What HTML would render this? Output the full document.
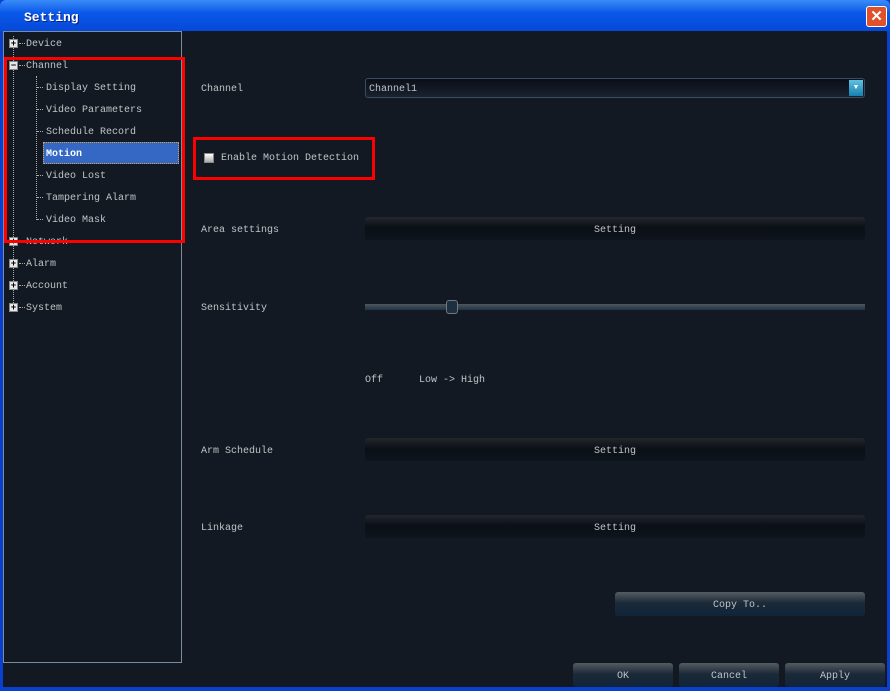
<!DOCTYPE html><html><head><style>
*{margin:0;padding:0;box-sizing:border-box}
body{width:890px;height:690px;overflow:hidden;background:#0a3fd0;font-family:"Liberation Mono",monospace;font-size:10px;color:#c0c4c8;position:relative}
.t{position:absolute;left:0;top:0;width:890px;height:32px;background:linear-gradient(#3a8cf8,#0a58e8 40%,#0648d8);border-radius:6px 6px 0 0}
.t span{position:absolute;left:24px;top:10px;color:#fff;font:bold 13px "Liberation Mono",monospace;text-shadow:1px 1px #0a2080}
.x{position:absolute;right:3px;top:6px;width:21px;height:21px;background:#e0502a;border:1px solid #fff;border-radius:3px;color:#fff;font:bold 15px "Liberation Sans";text-align:center;line-height:19px}
.main{position:absolute;left:3px;top:31px;width:884px;height:656px;background:#131922}
.tree{position:absolute;left:3px;top:31px;width:179px;height:632px;border:1px solid #7a8ca0;background:#131922}
.a{position:absolute;white-space:pre;margin-top:1px}
.pb{position:absolute;width:9px;height:9px;background:#e8e8e8;border:1px solid #888;color:#000;font:bold 9px/7px "Liberation Sans";text-align:center}
.dl{position:absolute;border-left:1px dotted #aaa}
.dh{position:absolute;border-top:1px dotted #aaa;width:6px}
.btn{position:absolute;background:linear-gradient(#555c62,#1c2a38 45%,#10243a);border-radius:3px;text-align:center;color:#c0c4c8}
.bar{position:absolute;left:365px;width:500px;height:23px;background:linear-gradient(#23272c,#0b1017 45%,#0e141c);border-radius:3px;text-align:center;line-height:28px}
.red{position:absolute;border:3px solid #f00}
</style></head><body>
<div class="t"><span>Setting</span><div class="x">✕</div></div>
<div class="main"></div>
<div class="tree"></div>
<div class="dl" style="left:13px;top:36px;height:275px"></div>
<div class="dl" style="left:36px;top:76px;height:144px"></div>
<div class="pb" style="left:9px;top:39px">+</div><div class="dh" style="left:19px;top:43px"></div><div class="a" style="left:26px;top:38px">Device</div>
<div class="pb" style="left:9px;top:61px">−</div><div class="dh" style="left:19px;top:65px"></div><div class="a" style="left:26px;top:60px">Channel</div>
<div class="dh" style="left:37px;top:87px"></div><div class="a" style="left:46px;top:82px">Display Setting</div>
<div class="dh" style="left:37px;top:109px"></div><div class="a" style="left:46px;top:104px">Video Parameters</div>
<div class="dh" style="left:37px;top:131px"></div><div class="a" style="left:46px;top:126px">Schedule Record</div>
<div style="position:absolute;left:43px;top:142px;width:136px;height:22px;background:#3468c4;border:1px dotted #e0a040"></div>
<div class="a" style="left:46px;top:148px;color:#fff;font-weight:bold">Motion</div>
<div class="dh" style="left:37px;top:175px"></div><div class="a" style="left:46px;top:170px">Video Lost</div>
<div class="dh" style="left:37px;top:197px"></div><div class="a" style="left:46px;top:192px">Tampering Alarm</div>
<div class="dh" style="left:37px;top:219px"></div><div class="a" style="left:46px;top:214px">Video Mask</div>
<div class="pb" style="left:9px;top:237px">+</div><div class="a" style="left:26px;top:236px">Network</div>
<div class="pb" style="left:9px;top:259px">+</div><div class="dh" style="left:19px;top:263px"></div><div class="a" style="left:26px;top:258px">Alarm</div>
<div class="pb" style="left:9px;top:281px">+</div><div class="dh" style="left:19px;top:285px"></div><div class="a" style="left:26px;top:280px">Account</div>
<div class="pb" style="left:9px;top:303px">+</div><div class="dh" style="left:19px;top:307px"></div><div class="a" style="left:26px;top:302px">System</div>
<div class="red" style="left:4px;top:57px;width:181px;height:186px"></div>

<div class="a" style="left:201px;top:83px">Channel</div>
<div style="position:absolute;left:365px;top:78px;width:500px;height:20px;border:1px solid #3a4a60;border-radius:3px;background:linear-gradient(#0a0e16,#1a2230)"></div>
<div class="a" style="left:369px;top:83px">Channel1</div>
<div style="position:absolute;left:849px;top:80px;width:14px;height:16px;background:linear-gradient(#60c0e0,#1880b0);color:#fff;font-size:7px;text-align:center;line-height:16px">▼</div>
<div class="red" style="left:193px;top:137px;width:182px;height:43px"></div>
<div style="position:absolute;left:204px;top:153px;width:10px;height:10px;background:linear-gradient(#fff,#aaa);border:1px solid #888"></div>
<div class="a" style="left:221px;top:152px">Enable Motion Detection</div>
<div class="a" style="left:201px;top:224px">Area settings</div>
<div class="bar" style="top:217px">Setting</div>
<div class="a" style="left:201px;top:302px">Sensitivity</div>
<div style="position:absolute;left:365px;top:304px;width:500px;height:6px;background:linear-gradient(#50565c,#1e3448)"></div>
<div style="position:absolute;left:446px;top:300px;width:12px;height:14px;border:1px solid #707880;border-radius:3px;background:#1c3040"></div>
<div class="a" style="left:365px;top:374px">Off</div>
<div class="a" style="left:419px;top:374px">Low -&gt; High</div>
<div class="a" style="left:201px;top:445px">Arm Schedule</div>
<div class="bar" style="top:438px">Setting</div>
<div class="a" style="left:201px;top:522px">Linkage</div>
<div class="bar" style="top:515px">Setting</div>
<div class="btn" style="left:615px;top:592px;width:250px;height:24px;line-height:27px">Copy To..</div>
<div class="btn" style="left:573px;top:663px;width:100px;height:24px;line-height:28px">OK</div>
<div class="btn" style="left:679px;top:663px;width:100px;height:24px;line-height:28px">Cancel</div>
<div class="btn" style="left:785px;top:663px;width:100px;height:24px;line-height:28px">Apply</div>
</body></html>
